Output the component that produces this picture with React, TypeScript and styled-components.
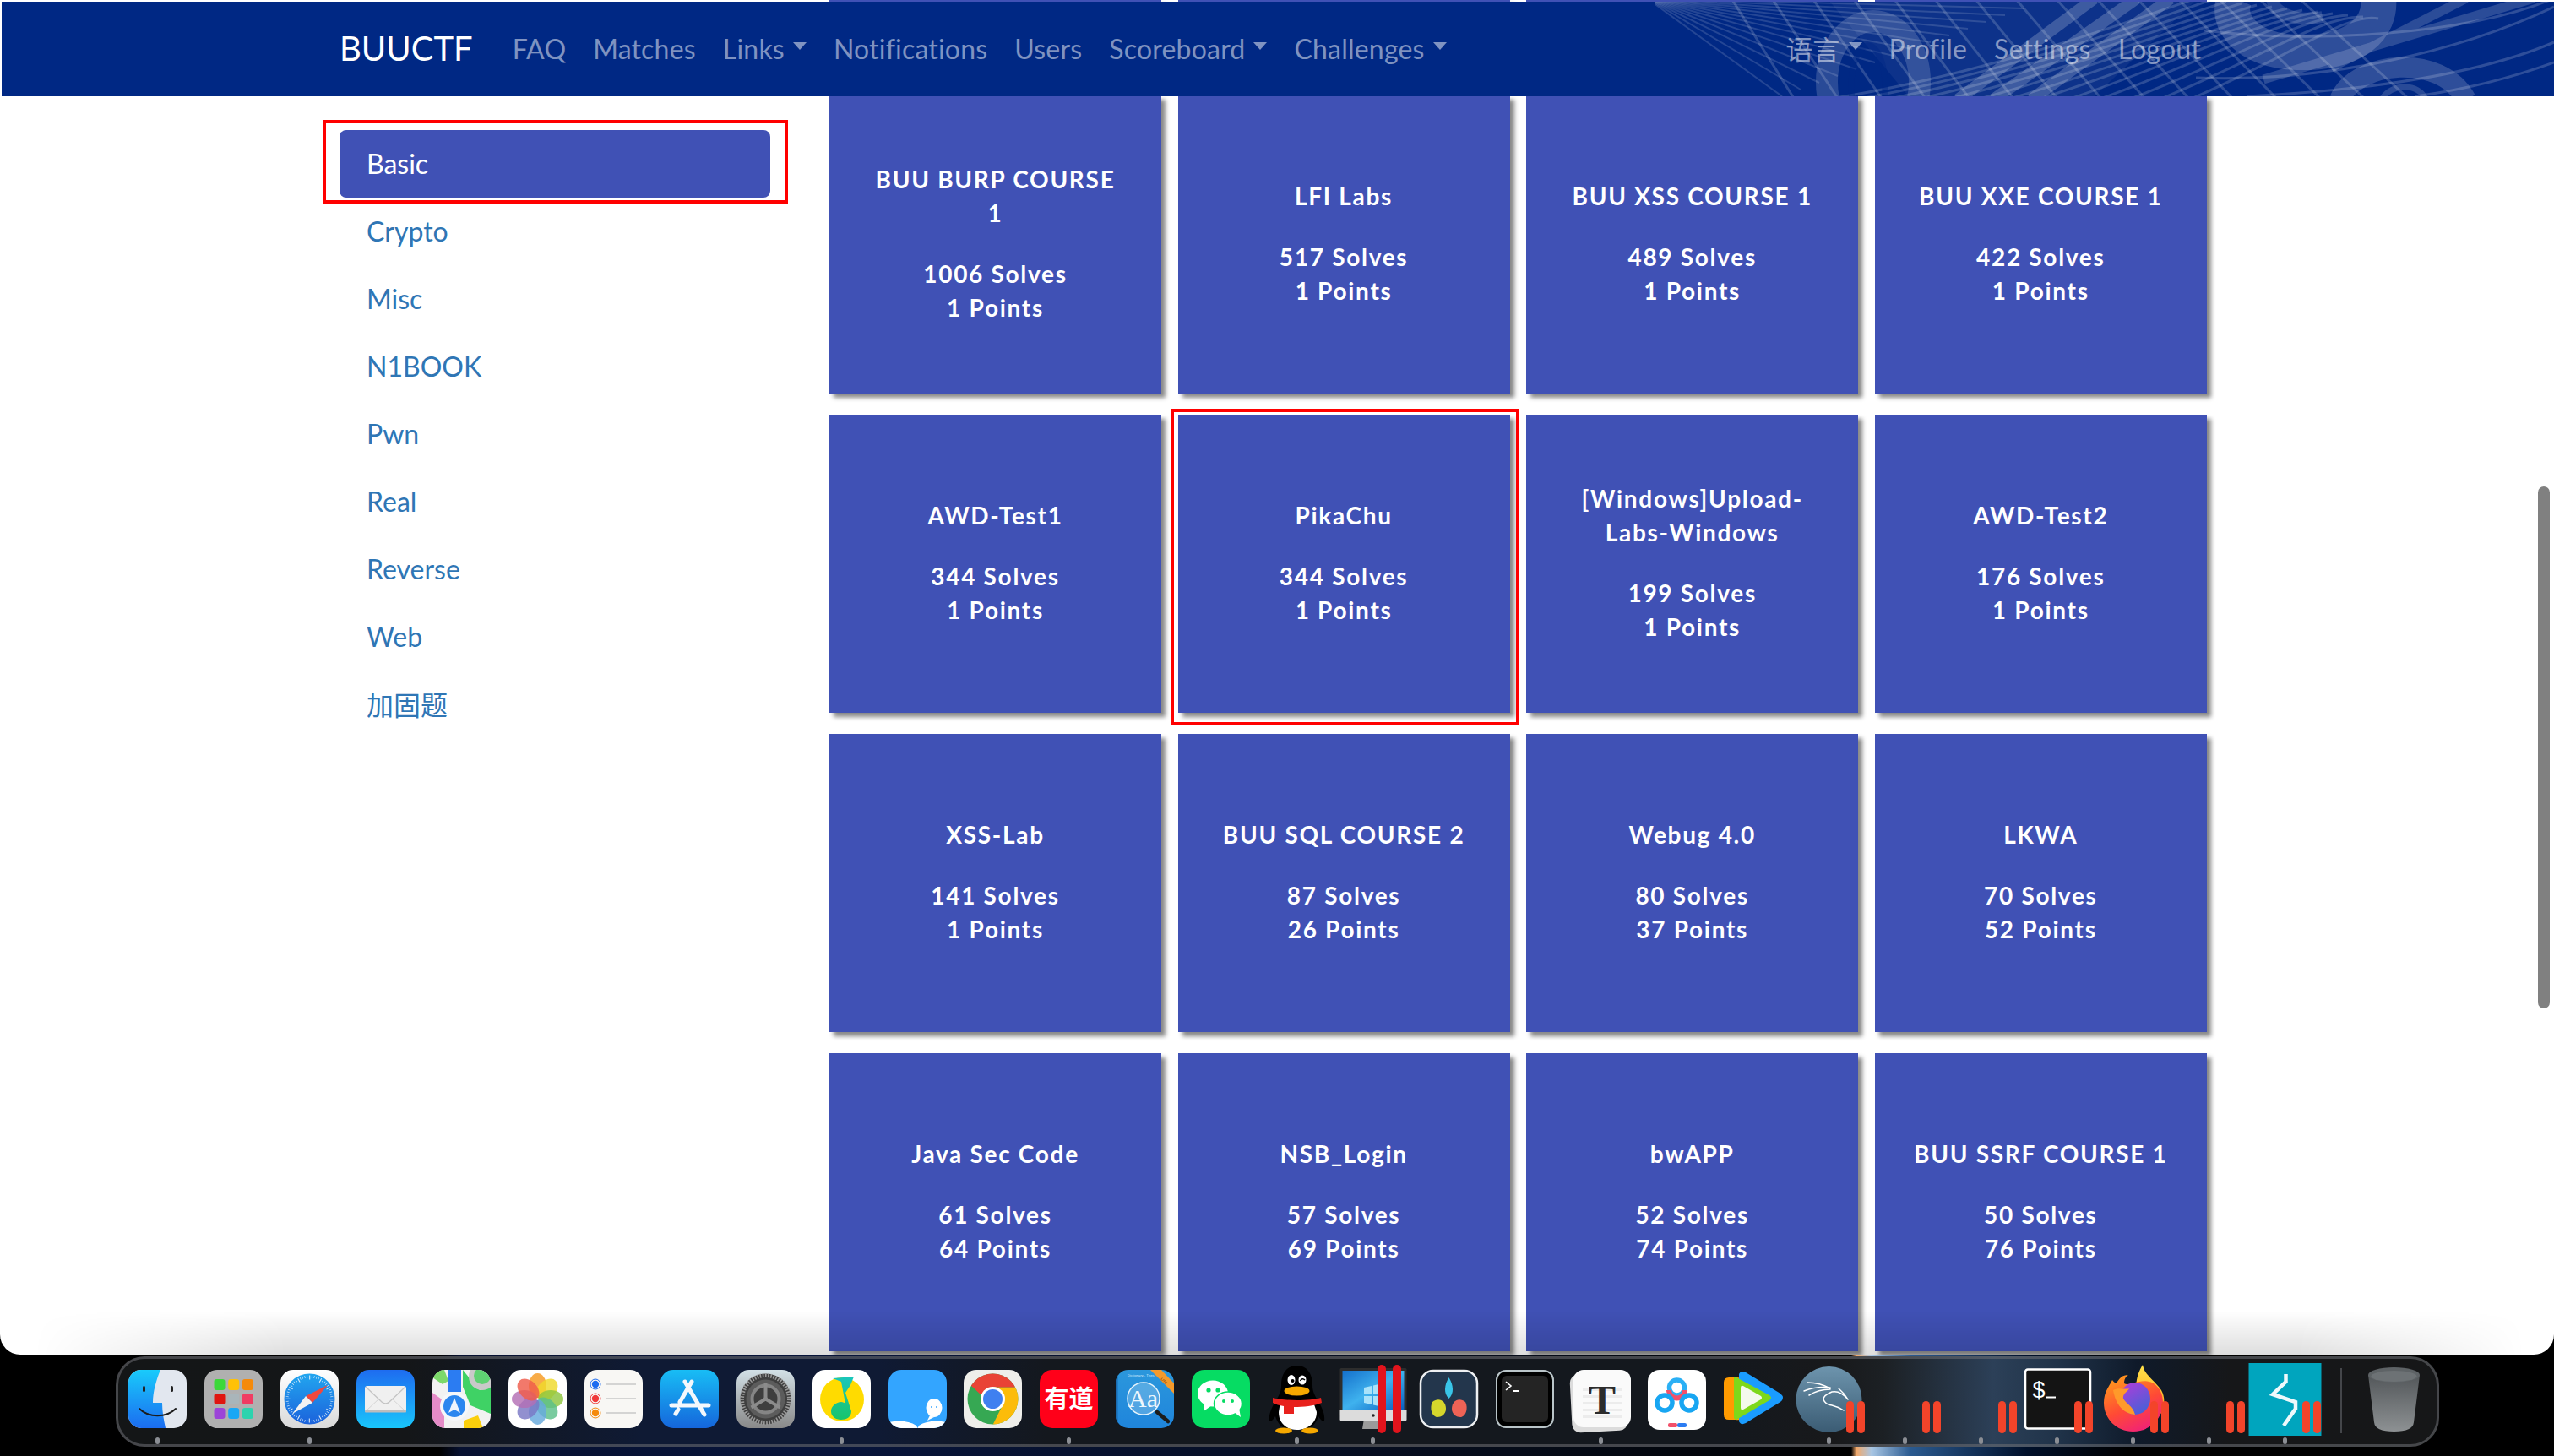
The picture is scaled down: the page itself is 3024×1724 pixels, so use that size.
import React from "react";
import styled, { createGlobalStyle } from "styled-components";

const Global = createGlobalStyle`
  html, body { margin: 0; padding: 0; background: #000; overflow: hidden; }
  * { box-sizing: border-box; }
`;

const Screen = styled.div`
  width: 3024px;
  height: 1724px;
  overflow: hidden;
  display: flex;
  flex-direction: column;
  font-family: Lato, "Noto Sans CJK SC", sans-serif;
  background: linear-gradient(90deg, #000 0, #000 520px, #061030 545px, #07143a 1000px, #050b18 1800px, #000 2192px, #f2a868 2198px, #a8c6e4 2216px, #2a5a90 2262px, #00102a 2400px, #000 2520px);
`;
const Window = styled.div`
  position: relative;
  flex: 0 0 1604px;
  background: #fff;
  overflow: hidden;
  border-radius: 0 0 24px 24px;
  &::after {
    content: "";
    position: absolute;
    left: 0;
    right: 0;
    bottom: 0;
    height: 52px;
    background: linear-gradient(180deg, rgba(0, 0, 0, 0), rgba(0, 0, 0, 0.13));
    -webkit-mask-image: linear-gradient(90deg, transparent 40px, #000 340px, #000 2720px, transparent 2990px);
    mask-image: linear-gradient(90deg, transparent 40px, #000 340px, #000 2720px, transparent 2990px);
    pointer-events: none;
  }
`;
const Navbar = styled.nav`
  position: absolute;
  z-index: 2;
  top: 2px;
  left: 2px;
  right: 0;
  height: 112px;
  background: #002884;
  display: flex;
  align-items: center;
  padding: 0 402px 2px 400px;
  overflow: hidden;
`;
const Wave = styled.svg`
  position: absolute;
  right: 0;
  top: 0;
  width: 1064px;
  height: 112px;
`;
const Brand = styled.a`
  position: relative;
  color: #fff;
  font-size: 40px;
  margin-right: 31px;
`;
const NavGroup = styled.div<{ $right?: boolean }>`
  position: relative;
  display: flex;
  margin-left: ${(p) => (p.$right ? "auto" : "0")};
`;
const NavLink = styled.a<{ $caret?: boolean }>`
  padding: 0 16px;
  font-size: 32px;
  letter-spacing: 0.2px;
  color: rgba(255, 255, 255, 0.5);
  display: flex;
  align-items: center;
  ${(p) =>
    p.$caret &&
    `&::after {
      content: "";
      margin: -6px 0 0 10px;
      border-top: 9px solid currentColor;
      border-left: 8.5px solid transparent;
      border-right: 8.5px solid transparent;
    }`}
`;
const Body = styled.div`
  display: grid;
  grid-template-columns: 510px auto;
  column-gap: 70px;
  padding-left: 402px;
`;
const Sidebar = styled.ul`
  list-style: none;
  margin: 154px 0 0;
  padding: 0;
`;
const SideItem = styled.li<{ $active?: boolean }>`
  position: relative;
  height: 80px;
  padding: 0 0 2px 32px;
  display: flex;
  align-items: center;
  font-size: 32px;
  border-radius: 8px;
  color: ${(p) => (p.$active ? "#fff" : "#2f76b5")};
  background: ${(p) => (p.$active ? "#4051b5" : "transparent")};
  ${(p) =>
    p.$active &&
    `&::after {
      content: "";
      position: absolute;
      inset: -12px -21px -7px -20px;
      border: 4px solid #f00;
    }`}
`;
const Grid = styled.div`
  display: grid;
  grid-template-columns: repeat(4, 393px);
  grid-template-rows: 88px repeat(4, 353px);
  column-gap: 19.6px;
  row-gap: 25px;
`;
const Card = styled.div<{ $marked?: boolean }>`
  position: relative;
  background: #4051b5;
  box-shadow: 5px 5px 5px #888;
  color: #fff;
  font-size: 28px;
  font-weight: 700;
  letter-spacing: 1.7px;
  line-height: 40px;
  text-align: center;
  display: flex;
  flex-direction: column;
  justify-content: center;
  padding: 0 43px 3px;
  ${(p) =>
    p.$marked &&
    `&::after {
      content: "";
      position: absolute;
      inset: -7px -11px -15px -9px;
      border: 4px solid #f00;
    }`}
`;
const CardTitle = styled.div`
  margin-bottom: 32px;
`;
const Scrollbar = styled.div`
  position: absolute;
  z-index: 1;
  left: 3005px;
  top: 576px;
  width: 14px;
  height: 618px;
  border-radius: 7px;
  background: #808080;
`;
const Dock = styled.div`
  margin: 2px 0 0 137px;
  width: 2751px;
  height: 107px;
  border: 3px solid rgba(110, 112, 116, 0.55);
  border-radius: 34px;
  padding-left: 1.5px;
  display: flex;
  background: linear-gradient(90deg, #141617 0, #141618 340px, #0f1a34 620px, #0f1a34 900px, #14181e 1100px, #14181e 1900px, #18191b 2030px, #1c2024 2090px, #2c4058 2220px, #1f3248 2300px, #0f1a2a 2390px, #161719 2500px, #161718 2751px);
`;
const Slot = styled.div`
  position: relative;
  flex: 0 0 89.96px;
  height: 101px;
  padding-top: 13px;
  display: flex;
  justify-content: center;
`;
const DockIcon = styled.svg`
  width: 69px;
  height: 69px;
  overflow: visible;
  flex: none;
`;
const Dot = styled.span`
  position: absolute;
  bottom: 0;
  left: 42.5px;
  width: 5px;
  height: 8px;
  border-radius: 3px;
  background: #8b8e94;
`;
const Bars = styled.span<{ $tall?: boolean }>`
  position: absolute;
  display: flex;
  bottom: 13px;
  left: ${(p) => (p.$tall ? "50px" : "66px")};
  height: ${(p) => (p.$tall ? "81px" : "38px")};
  gap: ${(p) => (p.$tall ? "8px" : "4px")};
`;
const Bar = styled.i<{ $tall?: boolean }>`
  width: ${(p) => (p.$tall ? "10px" : "9px")};
  border-radius: 5px;
  background: ${(p) => (p.$tall ? "#e2141c" : "#f3442a")};
`;
const Divider = styled.div`
  flex: 0 0 2px;
  height: 77px;
  margin: 11px 0 0 21px;
  background: #44464a;
`;
const TrashSlot = styled(Slot)`
  margin-left: 16px;
`;

const Sq = ({ fill, rx = 15 }: { fill: string; rx?: number }) => <rect width="69" height="69" rx={rx} fill={fill} />;
const range = (n: number) => Array.from({ length: n }, (_, i) => i);

const Finder = () => (
  <>
    <defs>
      <linearGradient id="fa" x1="0" y1="0" x2="0" y2="1"><stop offset="0" stopColor="#19cbfb" /><stop offset="1" stopColor="#1b6cf0" /></linearGradient>
      <clipPath id="fc"><rect width="69" height="69" rx="15" /></clipPath>
    </defs>
    <Sq fill="#e2e7ef" />
    <path d="M0 0H38C33 12 29 26 29 39H40C40 50 42 60 44 69H0Z" fill="url(#fa)" clipPath="url(#fc)" />
    <rect x="17" y="19" width="3" height="7" rx="1.5" fill="#222" />
    <rect x="50" y="19" width="3" height="7" rx="1.5" fill="#222" />
    <path d="M13 46C24 57 45 57 56 46" fill="none" stroke="#1b1b1b" strokeWidth="2" strokeLinecap="round" />
  </>
);
const Launchpad = () => {
  const c = ["#3cd83a", "#ffc107", "#f58a0b", "#e0150f", "#a9b5ba", "#f03c62", "#9c44d8", "#1aa7f5", "#2cd3ae"];
  return (
    <>
      <Sq fill="#b0b0b0" />
      {c.map((f, i) => (
        <rect key={f} x={11.5 + (i % 3) * 16.7} y={11 + Math.floor(i / 3) * 17} width="13" height="13" rx="3" fill={f} />
      ))}
    </>
  );
};
const Safari = () => (
  <>
    <defs>
      <linearGradient id="sa" x1="0" y1="0" x2="0" y2="1"><stop offset="0" stopColor="#fff" /><stop offset="1" stopColor="#d9d9d9" /></linearGradient>
      <linearGradient id="sb" x1="0" y1="0" x2="0" y2="1"><stop offset="0" stopColor="#22a6ef" /><stop offset="1" stopColor="#1b62dc" /></linearGradient>
    </defs>
    <Sq fill="url(#sa)" />
    <circle cx="34.5" cy="34.5" r="30" fill="url(#sb)" />
    {range(60).map((i) => (
      <rect key={i} x="34.2" y="6.5" width={i % 5 ? 0.6 : 1} height={i % 5 ? 3 : 5} fill="#e6f2fc" transform={`rotate(${i * 6} 34.5 34.5)`} />
    ))}
    <path d="M56 18L30 31L38 39Z" fill="#f0483e" />
    <path d="M14 52L30 31L38 39Z" fill="#f2f2f2" />
  </>
);
const Mail = () => (
  <>
    <defs>
      <linearGradient id="ma" x1="0" y1="0" x2="0" y2="1"><stop offset="0" stopColor="#1e6cf0" /><stop offset="1" stopColor="#19c6fb" /></linearGradient>
    </defs>
    <Sq fill="url(#ma)" />
    <rect x="10" y="19" width="49" height="31" rx="3" fill="#f0f0f0" />
    <path d="M11 20L30 38Q34.5 42 39 38L58 20" fill="none" stroke="#c4c4c4" strokeWidth="1.3" />
    <path d="M11 49L27 34M58 49L42 34" stroke="#d4d4d4" strokeWidth="1" />
    <rect x="10" y="48" width="49" height="2.5" rx="1" fill="#bcbcbc" />
  </>
);
const Maps = () => (
  <>
    <defs><clipPath id="mc"><rect width="69" height="69" rx="15" /></clipPath></defs>
    <g clipPath="url(#mc)">
      <rect width="69" height="69" fill="#f2f2f2" />
      <path d="M0 0H14L19 13L12 17L0 9Z" fill="#7cd96a" />
      <path d="M45 42L69 52V20L56 24L44 10L36 0V20Z" fill="#3fd265" />
      <rect x="19" width="15" height="26" fill="#2b7cf2" />
      <circle cx="59" cy="8" r="16" fill="#c9c9c9" />
      <circle cx="59" cy="7" r="10" fill="#5ed272" />
      <path d="M0 27L14 37V69H0Z" fill="#e58cc8" />
      <path d="M37 69V60L54 54L60 69Z" fill="#fbcf0c" />
    </g>
    <circle cx="26" cy="43" r="17" fill="#f5f7fa" />
    <circle cx="26" cy="43" r="13" fill="#2b86ef" />
    <path d="M26 33L33 51L26 47L19 51Z" fill="#eef4fc" />
  </>
);
const Photos = () => {
  const c = ["#f79a20", "#efd92b", "#8dc63f", "#5cbf8a", "#66a9dd", "#7a77c4", "#b36fb4", "#ef5b4a"];
  return (
    <>
      <Sq fill="#fff" />
      {c.map((f, i) => (
        <ellipse key={f} cx="34.5" cy="19" rx="10.5" ry="15" fill={f} fillOpacity="0.82" transform={`rotate(${i * 45} 34.5 34.5)`} />
      ))}
      <circle cx="34.5" cy="34.5" r="1.2" fill="#fff" />
    </>
  );
};
const Reminders = () => (
  <>
    <Sq fill="#f8f7f4" />
    {["#1c6cf0", "#f03a3a", "#f58a0b"].map((f, i) => (
      <g key={f}>
        <circle cx="13" cy={17 + i * 17} r="6" fill="none" stroke={f} strokeWidth="1" />
        <circle cx="13" cy={17 + i * 17} r="4.2" fill={f} />
        <rect x="25" y={16.4 + i * 17} width="36" height="1.2" fill="#bdbdbd" />
      </g>
    ))}
  </>
);
const AppStore = () => (
  <>
    <defs><linearGradient id="aa" x1="0" y1="0" x2="0" y2="1"><stop offset="0" stopColor="#18bdf5" /><stop offset="1" stopColor="#1566dc" /></linearGradient></defs>
    <Sq fill="url(#aa)" />
    <path d="M37 14L23 38M29 14L52 53M13 42H57M21 47L18 52" fill="none" stroke="#f4f8fc" strokeWidth="5" strokeLinecap="round" />
  </>
);
const Settings = () => (
  <>
    <defs><linearGradient id="ga" x1="0" y1="0" x2="0" y2="1"><stop offset="0" stopColor="#d2e0e6" /><stop offset="1" stopColor="#898989" /></linearGradient></defs>
    <Sq fill="url(#ga)" />
    <circle cx="34.5" cy="34.5" r="30" fill="#3f3f3f" />
    <circle cx="34.5" cy="34.5" r="28" fill="none" stroke="#9a9a9a" strokeWidth="5" strokeDasharray="1.6 1.6" />
    <circle cx="34.5" cy="34.5" r="23" fill="#5c5c5c" />
    <circle cx="34.5" cy="34.5" r="16" fill="#3e3e3e" stroke="#858585" strokeWidth="4" />
    <path d="M34.5 34.5V15M34.5 34.5L17.5 44.5M34.5 34.5L51.5 44.5" stroke="#8c8c8c" strokeWidth="4" />
    <circle cx="34.5" cy="34.5" r="2.5" fill="#8c8c8c" />
  </>
);
const QQMusic = () => (
  <>
    <defs><linearGradient id="qa" x1="0" y1="0" x2="0" y2="1"><stop offset="0" stopColor="#19c6bd" /><stop offset="1" stopColor="#17c46a" /></linearGradient></defs>
    <Sq fill="#fff" />
    <circle cx="35" cy="35" r="26" fill="#ffdb00" />
    <path d="M24 10L49 8L45 18L39 27L46 49C46 56 40 59 34 59C27 59 22 55 22 49C22 43 28 38 34 38C36 38 38 39 39 40L34 14Z" fill="url(#qa)" />
  </>
);
const Doc = () => (
  <>
    <defs><clipPath id="dc"><rect width="69" height="69" rx="15" /></clipPath></defs>
    <Sq fill="#33a5ff" />
    <g clipPath="url(#dc)">
      <path d="M0 62C12 60 24 60 33 66L34.5 69L36 66C45 60 57 60 69 62V69H0Z" fill="#fff" />
    </g>
    <ellipse cx="54" cy="45" rx="9.5" ry="11" fill="#fff" />
    <path d="M49 54L46 60L54 56Z" fill="#fff" />
    <circle cx="51" cy="44" r="1" fill="#33a5ff" />
    <circle cx="57" cy="44" r="1" fill="#33a5ff" />
  </>
);
const Chrome = () => (
  <>
    <defs><clipPath id="cc"><circle cx="34.5" cy="34.5" r="30" /></clipPath></defs>
    <Sq fill="#eeeeea" />
    <g clipPath="url(#cc)">
      <rect width="69" height="69" fill="#36a853" />
      <path d="M34.5 20.5H70V70H32L46 42Z" fill="#fcbc0a" />
      <path d="M7 17L22 31L34.5 20.5H70V0H0Z" fill="#e94335" />
    </g>
    <circle cx="34.5" cy="34.5" r="14.5" fill="#fff" />
    <circle cx="34.5" cy="34.5" r="11.5" fill="#3f80f0" />
  </>
);
const Youdao = () => (
  <>
    <Sq fill="#ff0019" />
    <text x="34.5" y="45" fontSize="29" fontWeight="700" fontFamily="'Noto Sans CJK SC', sans-serif" fill="#fff" textAnchor="middle">有道</text>
  </>
);
const Dict = () => (
  <>
    <defs>
      <linearGradient id="da" x1="0" y1="0" x2="0" y2="1"><stop offset="0" stopColor="#2b97dc" /><stop offset="1" stopColor="#1f85dc" /></linearGradient>
      <clipPath id="de"><rect width="69" height="69" rx="15" /></clipPath>
    </defs>
    <Sq fill="url(#da)" />
    <g clipPath="url(#de)">
      <rect width="2.5" height="69" fill="#1a6bb0" />
      <path d="M41 0H54L69 16V28Z" fill="#f59a2c" />
      <text x="14" y="8" fontSize="4.2" fontFamily="'Liberation Sans', sans-serif" fill="#d6ecfb">Dictionary - Thes</text>
      <text x="53" y="11" fontSize="4" fontWeight="700" fontFamily="'Liberation Sans', sans-serif" fill="#8a4a10" transform="rotate(45 53 11)">LITE</text>
    </g>
    <circle cx="33" cy="34" r="19" fill="#bfe0f5" fillOpacity="0.3" stroke="#e6f3fb" strokeWidth="1.5" />
    <text x="32.5" y="44" fontSize="30" fontFamily="'Liberation Serif', serif" fill="#eef7fd" textAnchor="middle">Aa</text>
    <path d="M49 50L62 61" stroke="#1c1c1c" strokeWidth="4.5" strokeLinecap="round" />
  </>
);
const WeChat = () => (
  <>
    <Sq fill="#06dc63" />
    <ellipse cx="25" cy="28" rx="18" ry="15.5" fill="#fff" />
    <path d="M15 38L14 49L24 42Z" fill="#fff" />
    <ellipse cx="43" cy="40" rx="16.5" ry="14" fill="#fff" stroke="#06dc63" strokeWidth="1.5" />
    <path d="M50 50L58 56L56 45Z" fill="#fff" />
    <circle cx="20" cy="24" r="2.6" fill="#06dc63" />
    <circle cx="31" cy="24" r="2.6" fill="#06dc63" />
    <circle cx="38" cy="37" r="2" fill="#06dc63" />
    <circle cx="48" cy="37" r="2" fill="#06dc63" />
  </>
);
const Penguin = () => (
  <>
    <path d="M34.5 -5C22 -5 16 5 16 18C16 25 14 29 10 36C5 44 1 52 2 60C3 62 6 60 9 55C11 62 16 68 22 70H47C53 68 58 62 60 55C63 60 66 62 67 60C68 52 64 44 59 36C55 29 53 25 53 18C53 5 47 -5 34.5 -5Z" fill="#000" />
    <path d="M15 38H54L58 50C58 62 48 71 34.5 71C21 71 13 62 13 50Z" fill="#fff" />
    <path d="M6 33C20 37 50 37 63 33L64 39C55 43 42 44 31 44V52H19V43C14 42 9 41 6 39Z" fill="#e8211d" />
    <ellipse cx="34.5" cy="25" rx="15" ry="5.5" fill="#f6a800" />
    <ellipse cx="28" cy="12" rx="4.5" ry="6" fill="#fff" />
    <circle cx="29.5" cy="13" r="2" fill="#000" />
    <ellipse cx="41" cy="12" rx="4.5" ry="5.5" fill="#fff" />
    <path d="M38.5 13Q41 9 44 12" fill="none" stroke="#000" strokeWidth="1.6" />
    <ellipse cx="19" cy="72" rx="10" ry="3.5" fill="#f6a800" />
    <ellipse cx="50" cy="72" rx="10" ry="3.5" fill="#f6a800" />
  </>
);
const Parallels = () => (
  <>
    <defs><linearGradient id="pa" x1="0" y1="0" x2="1" y2="1"><stop offset="0" stopColor="#1470cc" /><stop offset=".5" stopColor="#3fb2ee" /><stop offset="1" stopColor="#0b5fc0" /></linearGradient></defs>
    <path d="M24 58H45L47 70H22Z" fill="#9b9b9b" />
    <rect x="-4.5" y="-2" width="79" height="56" rx="1.5" fill="#2d2d2d" />
    <rect x="-1.5" y="1" width="73" height="46" fill="url(#pa)" />
    <path d="M-4.5 47H74.5V59Q74.5 61 72 61H-2Q-4.5 61 -4.5 59Z" fill="#dcdcdc" />
    <path d="M24 21L33 19V29H24ZM35 18.5L46 16V29H35ZM24 31H33V41L24 39ZM35 31H46V44L35 41.5Z" fill="#a9e2fa" />
    <circle cx="35" cy="54" r="1.8" fill="#222" />
  </>
);
const Davinci = () => (
  <>
    <rect x="1" y="1" width="67" height="67" rx="15" fill="#23364c" stroke="#eef0f2" strokeWidth="2.5" />
    <path d="M34.5 9C40 18 41 28 34.5 34C28 28 29 18 34.5 9Z" fill="#39c5e8" />
    <path d="M15 38C22 32 31 36 31 46C31 53 25 56 21 56C15 56 11 46 15 38Z" fill="#d5d62c" />
    <path d="M54 38C47 32 38 36 38 46C38 53 44 56 48 56C54 56 58 46 54 38Z" fill="#ef6356" />
  </>
);
const Term = () => (
  <>
    <rect x="1" y="1" width="67" height="67" rx="11" fill="#000" stroke="#b9c4c8" strokeWidth="2" />
    <rect x="7" y="7" width="55" height="55" rx="6" fill="#242424" />
    <path d="M12 14L18 19L12 24" fill="none" stroke="#fff" strokeWidth="1.6" />
    <rect x="20" y="24" width="7" height="2" fill="#fff" />
  </>
);
const Typora = () => (
  <>
    <rect x="-1" y="4" width="66" height="69" rx="10" fill="#dcdcdc" transform="rotate(-3 34 38)" />
    <rect x="2" y="0" width="68" height="68" rx="12" fill="#fafafa" />
    {range(5).map((i) => (
      <rect key={i} x="13" y={22 + i * 8} width="46" height="3" fill="#ececec" />
    ))}
    <text x="36" y="52" fontSize="48" fontWeight="700" fontFamily="'Liberation Serif', serif" fill="#2c2c2c" textAnchor="middle">T</text>
  </>
);
const Baidu = () => (
  <>
    <rect width="69" height="71" rx="14" fill="#fff" />
    <circle cx="34.5" cy="21" r="9" fill="none" stroke="#2bb0f5" strokeWidth="5.5" />
    <path d="M25 24A9 9 0 0 0 44 24" fill="none" stroke="#f2506a" strokeWidth="6" />
    <circle cx="20" cy="39" r="9" fill="none" stroke="#18a6f2" strokeWidth="5.5" />
    <circle cx="49" cy="39" r="9" fill="none" stroke="#18a6f2" strokeWidth="5.5" />
    <rect x="24" y="63" width="11" height="5" rx="2" fill="#f2506a" />
    <rect x="35" y="63" width="11" height="5" rx="2" fill="#2b7cf2" />
  </>
);
const TV = () => (
  <>
    <path d="M6 9H16Q20 9 22 11V58Q18 60 14 59H6Q0 59 0 53V15Q0 9 6 9Z" fill="#ff9a00" />
    <path d="M18 5Q20 0 26 3L67 28Q73 33 67 38L26 63Q20 66 18 61Z" fill="#1a9cff" />
    <path d="M12 9L15 9L54 30Q58 33 54 36L15 59Q12 59 12 56Z" fill="#7ed81a" />
    <path d="M20 21Q20 18 23 19L44 31Q46 33 44 35L23 47Q20 48 20 45Z" fill="#f4f9ec" />
  </>
);
const Kali = () => (
  <>
    <defs><linearGradient id="ka" x1="0" y1="0" x2="0" y2="1"><stop offset="0" stopColor="#6d94ad" /><stop offset="1" stopColor="#3b5c74" /></linearGradient></defs>
    <circle cx="34.5" cy="35" r="39" fill="url(#ka)" />
    <path d="M5 25Q20 19 36 21M9 15Q24 15 36 22M11 30Q22 23 36 23M46 22Q53 28 57 35M57 35Q48 24 38 26Q28 30 28 35Q30 41 38 42Q46 44 52 48" fill="none" stroke="#fff" strokeWidth="1.5" strokeLinecap="round" />
  </>
);
const XTerm = () => (
  <>
    <rect x="-3" y="-0.5" width="77" height="70" rx="3" fill="#141414" stroke="#fff" strokeWidth="2.5" />
    <text x="5.5" y="33" fontSize="27" fontFamily="'Liberation Sans', sans-serif" fill="#fff">$</text>
    <rect x="21" y="31.5" width="12" height="2" fill="#fff" />
  </>
);
const Firefox = () => (
  <>
    <defs>
      <linearGradient id="fo" x1="0.2" y1="0" x2="0.7" y2="1"><stop offset="0" stopColor="#ff9c1b" /><stop offset=".55" stopColor="#ff4a35" /><stop offset="1" stopColor="#f0207a" /></linearGradient>
      <linearGradient id="fp" x1="0" y1="0" x2="0.6" y2="1"><stop offset="0" stopColor="#b53bd9" /><stop offset="1" stopColor="#4b5fd8" /></linearGradient>
      <linearGradient id="fy" x1="0" y1="0" x2="0" y2="1"><stop offset="0" stopColor="#ffe24a" /><stop offset="1" stopColor="#ff9b15" /></linearGradient>
    </defs>
    <path d="M46 -6C48 6 58 10 68 24C74 34 72 50 62 58L40 30C36 16 40 4 46 -6Z" fill="url(#fy)" />
    <path d="M10 12C6 20 0 26 0 39C0 58 15 73 34.5 73C54 73 70 58 70 39C70 32 68 26 65 22C60 14 50 12 42 14C34 15 28 19 24 16C24 10 27 7 29 6C22 6 18 10 15 16C13 15 11 14 10 12Z" fill="url(#fo)" />
    <ellipse cx="37" cy="34" rx="18" ry="19" fill="url(#fp)" />
    <path d="M11 24C17 20 25 24 30 22C28 26 22 28 23 34C26 40 34 42 37 53C24 52 14 42 11 24Z" fill="#ff9a2a" />
  </>
);
const Bolt = () => (
  <>
    <rect x="-8.5" y="-8" width="86" height="86" fill="#00a5be" />
    <path d="M35.5 5V14L20 29L47 38V46L33 66" fill="none" stroke="#eef9fb" strokeWidth="4.5" strokeLinejoin="miter" />
  </>
);
const Trash = () => (
  <>
    <defs><linearGradient id="tr" x1="0" y1="0" x2="0" y2="1"><stop offset="0" stopColor="#53575a" /><stop offset="1" stopColor="#8d9193" /></linearGradient></defs>
    <path d="M4 6L11 62Q12 73 34.5 73Q57 73 58 62L65 6Z" fill="url(#tr)" />
    <ellipse cx="34.5" cy="6" rx="30.5" ry="9" fill="#5e6366" />
    <ellipse cx="34.5" cy="7.5" rx="27" ry="6.5" fill="#6d7275" />
  </>
);

const icons: (React.FC | null)[] = [
  Finder, Launchpad, Safari, Mail, Maps, Photos, Reminders, AppStore, Settings, QQMusic, Doc, Chrome, Youdao, Dict, WeChat,
  Penguin, Parallels, Davinci, Term, Typora, Baidu, TV, Kali, null, null, XTerm, Firefox, null, Bolt,
];
const dots = new Set([0, 2, 9, 12, 15, 16, 19, 22, 23, 24, 25, 26, 27, 28]);

const WaveArt = () => (
  <Wave viewBox="0 0 1064 112" fill="none">
    <g stroke="#fff" strokeOpacity="0.14" strokeWidth="2">
      {range(14).map((i) => (
        <path key={i} d={`M-10 -4L${150 + i * 22} ${112 - i * 8}`} />
      ))}
    </g>
    <g stroke="#fff" strokeOpacity="0.17" strokeWidth="3">
      {range(15).map((i) => (
        <path key={i} d={`M${90 + i * 48} -4L${165 + i * 52} 116`} />
      ))}
    </g>
    <g stroke="#fff" strokeOpacity="0.17" strokeWidth="3">
      {range(13).map((i) => (
        <path key={i} d={`M${200 + i * 36} 116C${330 + i * 36} ${96 - i * 3} ${460 + i * 30} ${60 - i * 4} ${640 + i * 18} ${-4 + i * 2}`} />
      ))}
    </g>
    <path d="M205 -2L380 -2L640 -2L520 112L300 112Z" fill="#fff" fillOpacity="0.05" />
    <ellipse cx="258" cy="95" rx="55" ry="72" stroke="#fff" strokeOpacity="0.16" strokeWidth="26" />
    <ellipse cx="252" cy="100" rx="20" ry="48" stroke="#002884" strokeOpacity="0.45" strokeWidth="7" />
    <path d="M358 116L520 -4M400 116L570 -4M445 116L610 -4" stroke="#fff" strokeOpacity="0.2" strokeWidth="14" />
    <path d="M686 -4C674 24 700 58 760 60C830 62 860 30 856 -4" stroke="#fff" strokeOpacity="0.18" strokeWidth="42" />
    <path d="M730 -4C732 14 760 24 790 18" stroke="#fff" strokeOpacity="0.14" strokeWidth="14" />
    <path d="M720 92L1040 -4M800 78L960 -4" stroke="#fff" strokeOpacity="0.17" strokeWidth="11" />
    <path d="M810 116C830 70 930 60 960 116" stroke="#fff" strokeOpacity="0.18" strokeWidth="24" />
    <path d="M860 116C870 96 905 96 912 116" stroke="#fff" strokeOpacity="0.16" strokeWidth="7" />
    <path d="M640 90C790 96 950 60 1064 6M650 34C770 50 960 40 1064 -4M700 112C860 104 980 84 1064 48M900 112C960 104 1020 88 1064 72" stroke="#fff" strokeOpacity="0.18" strokeWidth="3" />
  </Wave>
);

const cards: [string, string, string, boolean?][] = [
  ["BUU BURP COURSE 1", "1006 Solves", "1 Points"],
  ["LFI Labs", "517 Solves", "1 Points"],
  ["BUU XSS COURSE 1", "489 Solves", "1 Points"],
  ["BUU XXE COURSE 1", "422 Solves", "1 Points"],
  ["AWD-Test1", "344 Solves", "1 Points"],
  ["PikaChu", "344 Solves", "1 Points", true],
  ["[Windows]Upload-Labs-Windows", "199 Solves", "1 Points"],
  ["AWD-Test2", "176 Solves", "1 Points"],
  ["XSS-Lab", "141 Solves", "1 Points"],
  ["BUU SQL COURSE 2", "87 Solves", "26 Points"],
  ["Webug 4.0", "80 Solves", "37 Points"],
  ["LKWA", "70 Solves", "52 Points"],
  ["Java Sec Code", "61 Solves", "64 Points"],
  ["NSB_Login", "57 Solves", "69 Points"],
  ["bwAPP", "52 Solves", "74 Points"],
  ["BUU SSRF COURSE 1", "50 Solves", "76 Points"],
];
const categories = ["Basic", "Crypto", "Misc", "N1BOOK", "Pwn", "Real", "Reverse", "Web", "加固题"];

export default function App() {
  return (
    <Screen>
      <Global />
      <Window>
        <Navbar>
          <WaveArt />
          <Brand>BUUCTF</Brand>
          <NavGroup>
            <NavLink>FAQ</NavLink>
            <NavLink>Matches</NavLink>
            <NavLink $caret>Links</NavLink>
            <NavLink>Notifications</NavLink>
            <NavLink>Users</NavLink>
            <NavLink $caret>Scoreboard</NavLink>
            <NavLink $caret>Challenges</NavLink>
          </NavGroup>
          <NavGroup $right>
            <NavLink $caret>语言</NavLink>
            <NavLink>Profile</NavLink>
            <NavLink>Settings</NavLink>
            <NavLink>Logout</NavLink>
          </NavGroup>
        </Navbar>
        <Body>
          <Sidebar>
            {categories.map((c, i) => (
              <SideItem key={c} $active={i === 0}>{c}</SideItem>
            ))}
          </Sidebar>
          <Grid>
            {range(4).map((i) => (
              <Card key={i} />
            ))}
            {cards.map(([title, solves, points, marked]) => (
              <Card key={title} $marked={marked}>
                <CardTitle>{title}</CardTitle>
                <div>{solves}</div>
                <div>{points}</div>
              </Card>
            ))}
          </Grid>
        </Body>
        <Scrollbar />
      </Window>
      <Dock>
        {icons.map((Icon, i) => (
          <Slot key={i}>
            {Icon && (
              <DockIcon viewBox="0 0 69 69">
                <Icon />
              </DockIcon>
            )}
            {i === 16 && (
              <Bars $tall>
                <Bar $tall />
                <Bar $tall />
              </Bars>
            )}
            {i >= 22 && (
              <Bars>
                <Bar />
                <Bar />
              </Bars>
            )}
            {dots.has(i) && <Dot />}
          </Slot>
        ))}
        <Divider />
        <TrashSlot>
          <DockIcon viewBox="0 0 69 69">
            <Trash />
          </DockIcon>
        </TrashSlot>
      </Dock>
    </Screen>
  );
}
